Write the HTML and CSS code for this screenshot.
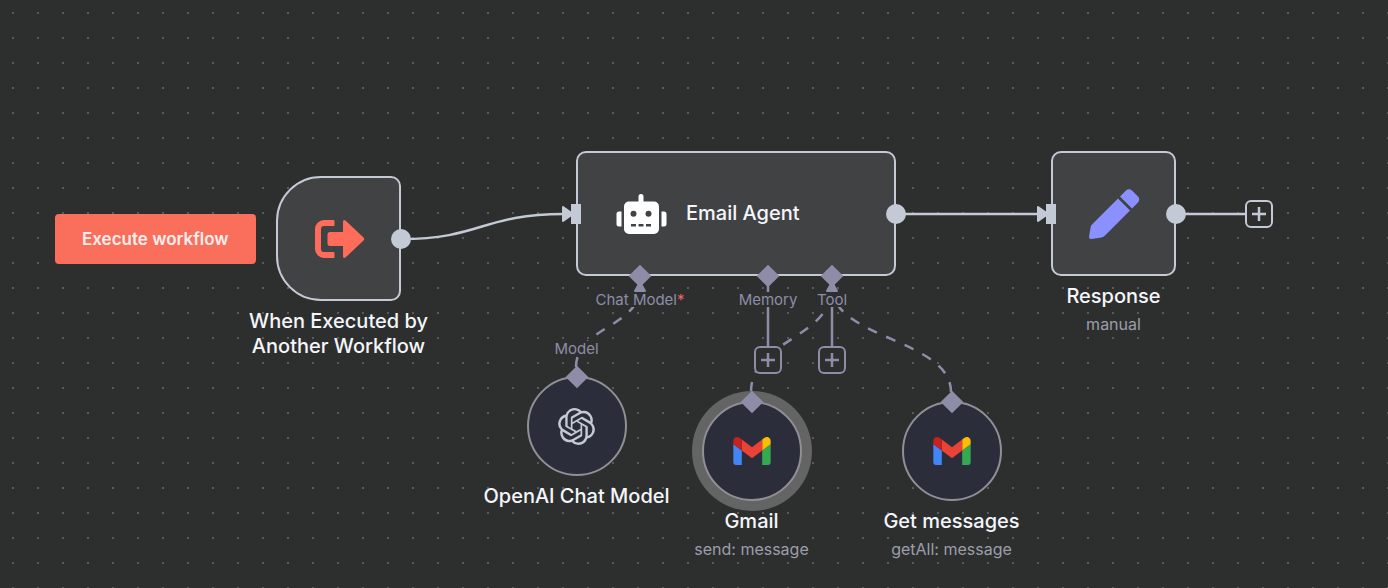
FILE: index.html
```html
<!DOCTYPE html>
<html lang="en">
<head>
<meta charset="utf-8">
<title>Email Agent workflow</title>
<link rel="stylesheet" href="styles.css">
</head>
<body>
<main class="canvas">
  <svg class="edges" aria-hidden="true">
    <g class="edge-main">
      <path d="M401 239C482 239 482 214 564 214"/>
      <path d="M896 214H1040"/>
      <path d="M1177 214H1246"/>
    </g>
    <g class="arrow-main">
      <path d="M563 207L573 214L563 221Z"/>
      <path d="M1038 207L1048 214L1038 221Z"/>
    </g>
    <g class="edge-sub">
      <path d="M768 276V347"/>
      <path d="M832 276V347"/>
      <path class="dashed" d="M576 367C576 327 640 327 640 287"/>
      <path class="dashed" d="M751 392C751 339 832 339 832 287"/>
      <path class="dashed" d="M951 392C951 339 832 339 832 287"/>
    </g>
    <g class="arrow-sub">
      <path d="M640 282L645 291H635Z"/>
      <path d="M832 282L837 291H827Z"/>
    </g>
  </svg>

  <button class="execute" type="button">Execute workflow</button>

  <section class="node node-trigger">
    <div class="box trigger">
      <svg class="icon-large" viewBox="0 0 50 50" aria-hidden="true"><path fill="#ff6d5a" d="M19.500 6H10A9 9 0 0 0 1 15V35A9 9 0 0 0 10 44H19.500Q20.500 44 20.500 43V39Q20.500 38 19.500 38H10A3 3 0 0 1 7 35V15A3 3 0 0 1 10 12H19.500Q20.500 12 20.500 11V7Q20.500 6 19.500 6ZM29 8Q29 4.500 32 7L49 23Q51.500 25 49 27L32 43Q29 45.500 29 42V32H16Q13.500 32 13.500 29.500V20.500Q13.500 18 16 18H29Z"/></svg>
      <span class="port out"></span>
    </div>
    <h2 class="title">When Executed by<br>Another Workflow</h2>
  </section>

  <section class="node node-agent">
    <div class="box agent">
      <svg class="icon-large" viewBox="0 0 50 50" aria-hidden="true"><path fill="#fff" fill-rule="evenodd" d="M22.500 12.500V7.500a2.500 2.500 0 0 1 5 0V12.500H38a5 5 0 0 1 5 5V40a5 5 0 0 1-5 5H13a5 5 0 0 1-5-5V17.500a5 5 0 0 1 5-5ZM17.500 21.800a3 3 0 1 0 0 6 3 3 0 0 0 0-6ZM32.500 21.800a3 3 0 1 0 0 6 3 3 0 0 0 0-6ZM15 35V37.500H20V35ZM22.500 35V37.500H27.500V35ZM30 35V37.500H35V35ZM3 22.500H5.500V37.500H3a2.500 2.500 0 0 1-2.500-2.500V25A2.500 2.500 0 0 1 3 22.500ZM45.500 22.500H48a2.500 2.500 0 0 1 2.500 2.500V35a2.500 2.500 0 0 1-2.500 2.500H45.500Z"/></svg>
      <h2 class="title">Email Agent</h2>
      <span class="port in"></span>
      <span class="port out"></span>
      <span class="port diamond at-model"></span>
      <span class="port diamond at-memory"></span>
      <span class="port diamond at-tool"></span>
      <span class="port-label at-model">Chat Model<b class="required">*</b></span>
      <span class="port-label at-memory">Memory</span>
      <span class="port-label at-tool">Tool</span>
    </div>
  </section>

  <section class="node node-response">
    <div class="box">
      <svg class="icon-large" viewBox="0 0 50 50" aria-hidden="true"><path fill="#8b90ff" d="M31 7.500L37 1.500Q40 -1 43 1.500L49 7.500Q51.500 10.500 49 13.500L43 19.500ZM29 9.500L41 21.500L16 46.500Q14.500 48 12.500 48.400L2.500 50Q0 50.300 0 48L1.700 37.800Q2 36.300 3.500 35Z"/></svg>
      <span class="port in"></span>
      <span class="port out"></span>
    </div>
    <h2 class="title">Response</h2>
    <p class="subtitle">manual</p>
  </section>

  <section class="node node-openai">
    <div class="box round">
      <svg class="icon-openai" viewBox="0 0 24 24" aria-hidden="true"><path fill="#c3c9d5" d="M22.2819 9.8211a5.9847 5.9847 0 0 0-.5157-4.9108 6.0462 6.0462 0 0 0-6.5098-2.9A6.0651 6.0651 0 0 0 4.9807 4.1818a5.9847 5.9847 0 0 0-3.9977 2.9 6.0462 6.0462 0 0 0 .7427 7.0966 5.98 5.98 0 0 0 .511 4.9107 6.051 6.051 0 0 0 6.5146 2.9001A5.9847 5.9847 0 0 0 13.2599 24a6.0557 6.0557 0 0 0 5.7718-4.2058 5.9894 5.9894 0 0 0 3.9977-2.9001 6.0557 6.0557 0 0 0-.7475-7.0729zm-9.022 12.6081a4.4755 4.4755 0 0 1-2.8764-1.0408l.1419-.0804 4.7783-2.7582a.7948.7948 0 0 0 .3927-.6813v-6.7369l2.02 1.1686a.071.071 0 0 1 .038.052v5.5826a4.504 4.504 0 0 1-4.4945 4.4944zm-9.6607-4.1254a4.4708 4.4708 0 0 1-.5346-3.0137l.142.0852 4.783 2.7582a.7712.7712 0 0 0 .7806 0l5.8428-3.3685v2.3324a.0804.0804 0 0 1-.0332.0615L9.74 19.9502a4.4992 4.4992 0 0 1-6.1408-1.6464zM2.3408 7.8956a4.485 4.485 0 0 1 2.3655-1.9728V11.6a.7664.7664 0 0 0 .3879.6765l5.8144 3.3543-2.0201 1.1685a.0757.0757 0 0 1-.071 0l-4.8303-2.7865A4.504 4.504 0 0 1 2.3408 7.872zm16.5963 3.8558L13.1038 8.364 15.1192 7.2a.0757.0757 0 0 1 .071 0l4.8303 2.7913a4.4944 4.4944 0 0 1-.6765 8.1042v-5.6772a.79.79 0 0 0-.407-.667zm2.0107-3.0231l-.142-.0852-4.7735-2.7818a.7759.7759 0 0 0-.7854 0L9.409 9.2297V6.8974a.0662.0662 0 0 1 .0284-.0615l4.8303-2.7866a4.4992 4.4992 0 0 1 6.6802 4.66zM8.3065 12.863l-2.02-1.1638a.0804.0804 0 0 1-.038-.0567V6.0742a4.4992 4.4992 0 0 1 7.3757-3.4537l-.142.0805L8.704 5.459a.7948.7948 0 0 0-.3927.6813zm1.0976-2.3654l2.602-1.4998 2.6069 1.4998v2.9994l-2.5974 1.4997-2.6067-1.4997Z"/></svg>
      <span class="port diamond top"></span>
      <span class="port-label top">Model</span>
    </div>
    <h2 class="title">OpenAI Chat Model</h2>
  </section>

  <section class="node node-gmail">
    <div class="box round selected">
      <svg class="icon-gmail" viewBox="52 42 88 66" aria-hidden="true"><path fill="#4285f4" d="M58 108h14V74L52 59v43c0 3.32 2.69 6 6 6"/><path fill="#34a853" d="M120 108h14c3.32 0 6-2.69 6-6V59l-20 15"/><path fill="#fbbc04" d="M120 48v26l20-15v-8c0-7.42-8.47-11.65-14.4-7.2"/><path fill="#ea4335" d="M72 74V48l24 18 24-18v26L96 92"/><path fill="#c5221f" d="M52 51v8l20 15V48l-5.6-4.2c-5.94-4.45-14.4-.22-14.4 7.2"/></svg>
      <span class="port diamond top"></span>
    </div>
    <h2 class="title">Gmail</h2>
    <p class="subtitle">send: message</p>
  </section>

  <section class="node node-messages">
    <div class="box round">
      <svg class="icon-gmail" viewBox="52 42 88 66" aria-hidden="true"><path fill="#4285f4" d="M58 108h14V74L52 59v43c0 3.32 2.69 6 6 6"/><path fill="#34a853" d="M120 108h14c3.32 0 6-2.69 6-6V59l-20 15"/><path fill="#fbbc04" d="M120 48v26l20-15v-8c0-7.42-8.47-11.65-14.4-7.2"/><path fill="#ea4335" d="M72 74V48l24 18 24-18v26L96 92"/><path fill="#c5221f" d="M52 51v8l20 15V48l-5.6-4.2c-5.94-4.45-14.4-.22-14.4 7.2"/></svg>
      <span class="port diamond top"></span>
    </div>
    <h2 class="title">Get messages</h2>
    <p class="subtitle">getAll: message</p>
  </section>

  <button class="add add-memory" type="button" aria-label="Add memory"><svg viewBox="0 0 14 14" aria-hidden="true"><path d="M7 0V14M0 7H14"/></svg></button>
  <button class="add add-tool" type="button" aria-label="Add tool"><svg viewBox="0 0 14 14" aria-hidden="true"><path d="M7 0V14M0 7H14"/></svg></button>
  <button class="add add-next" type="button" aria-label="Add next node"><svg viewBox="0 0 14 14" aria-hidden="true"><path d="M7 0V14M0 7H14"/></svg></button>
</main>
</body>
</html>
```
FILE: styles.css
```css
:root {
  --bg: #2d2f2e;
  --line: #c3c9d5;
  --sub: #8d8da8;
  --node: #414244;
}

* {
  box-sizing: border-box;
}

body {
  margin: 0;
  background: var(--bg);
  font-family: Inter, "Liberation Sans", sans-serif;
}

.canvas {
  position: relative;
  min-height: 100vh;
  overflow: hidden;
  background-image: radial-gradient(circle at 13px 13px, #656766 0, #656766 0.5px, transparent 1.5px);
  background-size: 25px 25px;
}

.edges {
  position: absolute;
  inset: 0;
  width: 100%;
  height: 100%;
}

.edge-main path,
.edge-sub path {
  fill: none;
  stroke-width: 2.5;
}

.edge-main { stroke: var(--line); }
.edge-sub { stroke: var(--sub); }
.edge-sub .dashed { stroke-dasharray: 10 10; }

.arrow-main,
.arrow-sub {
  stroke-width: 2;
  stroke-linejoin: round;
}

.arrow-main { fill: var(--line); stroke: var(--line); }
.arrow-sub { fill: var(--sub); stroke: var(--sub); }

.execute {
  position: absolute;
  left: 55px;
  top: 214px;
  padding: 14px 27px;
  border: 0;
  border-radius: 4px;
  background: #f96f5c;
  color: #fdeeec;
  font: 600 17px/22px Inter, "Liberation Sans", sans-serif;
  white-space: nowrap;
}

.node {
  position: absolute;
  display: flex;
  flex-direction: column;
  align-items: center;
  width: 201px;
}

.node-trigger { left: 238px; top: 176px; }
.node-agent { left: 576px; top: 151px; width: 320px; }
.node-response { left: 1013px; top: 151px; }
.node-openai { left: 476px; top: 376px; }
.node-gmail { left: 651px; top: 401px; }
.node-messages { left: 851px; top: 401px; }

.box {
  position: relative;
  display: flex;
  align-items: center;
  justify-content: center;
  width: 125px;
  height: 125px;
  margin-bottom: 8px;
  border: 2px solid var(--line);
  border-radius: 10px;
  background: var(--node);
}

.trigger { border-radius: 45px 10px 10px 45px; }

.agent {
  justify-content: flex-start;
  gap: 20px;
  width: 100%;
  margin-bottom: 0;
  padding-left: 38px;
}

.round {
  width: 100px;
  height: 100px;
  border-color: #8f9094;
  border-radius: 50%;
  background: #2c2d3a;
}

.selected { box-shadow: 0 0 0 10px #646464; }

.icon-large {
  width: 50px;
  height: 50px;
  overflow: visible;
}

.icon-openai { width: 37px; height: 37px; }
.icon-gmail { width: 38px; height: 28px; }

.title {
  margin: 0;
  color: #f4f6fb;
  font-size: 20px;
  font-weight: 500;
  line-height: 25px;
  text-align: center;
  white-space: nowrap;
}

.subtitle {
  margin: 3px 0 0;
  color: #9b9eaa;
  font-size: 16px;
  line-height: 24px;
  white-space: nowrap;
}

.port {
  position: absolute;
  background: var(--line);
}

.out {
  right: -12px;
  top: 51px;
  width: 20px;
  height: 20px;
  border-radius: 50%;
}

.in {
  left: -7px;
  top: 51px;
  width: 10px;
  height: 20px;
}

.diamond {
  width: 16px;
  height: 16px;
  background: var(--sub);
  transform: translate(-50%, -50%) rotate(45deg);
}

.diamond.top { left: 50%; top: -1px; }
.agent .diamond { top: 123px; }
.at-model { left: 62px; }
.at-memory { left: 190px; }
.at-tool { left: 254px; }

.port-label {
  position: absolute;
  top: 139px;
  background: var(--bg);
  color: var(--sub);
  font-size: 15px;
  line-height: 15px;
  white-space: nowrap;
  transform: translateX(-50%);
}

.port-label.top { left: 50%; top: -37px; }

.required {
  color: #f0616d;
  font-weight: 400;
}

.add {
  position: absolute;
  display: grid;
  place-items: center;
  width: 28px;
  height: 28px;
  padding: 0;
  border: 2px solid var(--sub);
  border-radius: 6px;
  background: var(--bg);
}

.add svg {
  width: 14px;
  height: 14px;
  fill: none;
  stroke: var(--sub);
  stroke-width: 2.5;
}

.add-memory { left: 754px; top: 346px; }
.add-tool { left: 818px; top: 346px; }
.add-next { left: 1245px; top: 200px; border-color: var(--line); }
.add-next svg { stroke: var(--line); }
```
